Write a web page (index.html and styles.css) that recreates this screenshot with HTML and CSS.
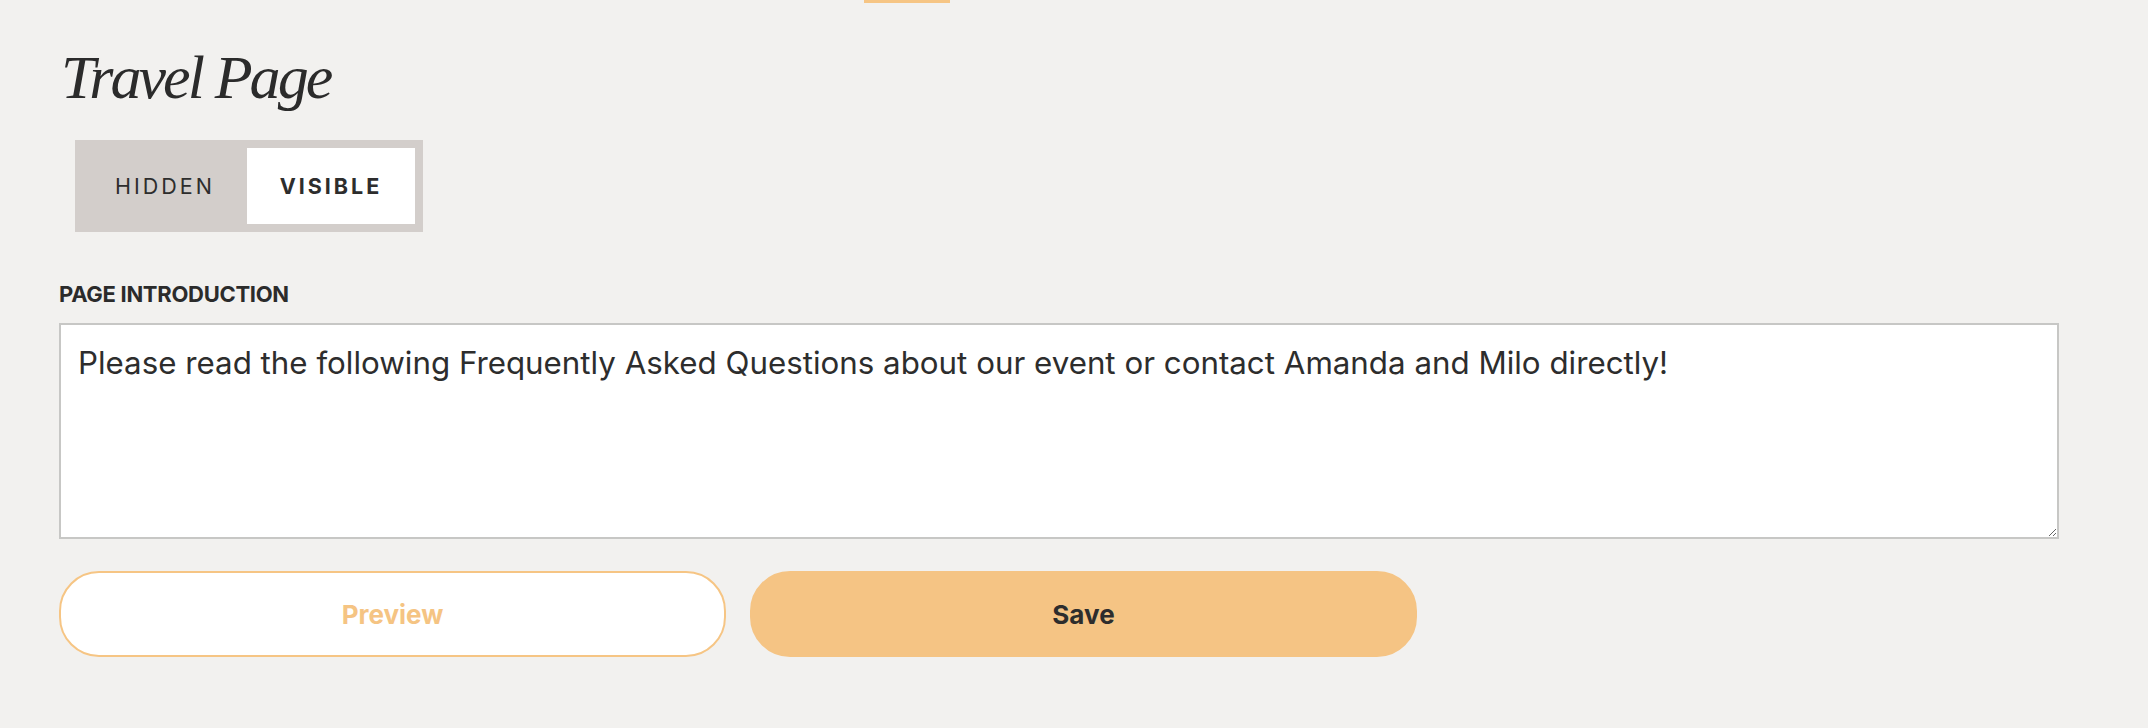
FILE: index.html
```html
<!DOCTYPE html>
<html lang="en">
<head>
<meta charset="utf-8">
<title>Travel Page</title>
<link rel="stylesheet" href="styles.css">
</head>
<body>
<div class="topbar"><div class="tab-indicator"></div></div>
<main class="page">
  <h1 class="title">Travel Page</h1>
  <div class="toggle">
    <button class="toggle-option">HIDDEN</button>
    <button class="toggle-option is-active">VISIBLE</button>
  </div>
  <label class="field-label" for="intro">PAGE INTRODUCTION</label>
  <textarea id="intro" class="field-textarea">Please read the following Frequently Asked Questions about our event or contact Amanda and Milo directly!</textarea>
  <div class="actions">
    <button class="btn btn-outline">Preview</button>
    <button class="btn btn-primary">Save</button>
  </div>
</main>
</body>
</html>
```

FILE: styles.css
```css
html, body {
  margin: 0;
  padding: 0;
  background: #f2f1ef;
  color: #2d2d2d;
  font-family: Inter, "Noto Sans", sans-serif;
}

.topbar {
  height: 3px;
}

.tab-indicator {
  margin-left: 864px;
  width: 86px;
  height: 3px;
  background: #f6c584;
}

.page {
  padding: 0 89px 0 59px;
  display: flex;
  flex-direction: column;
  align-items: flex-start;
}

.title {
  margin: 43px 0 0 2px;
  font-family: "Liberation Serif", serif;
  font-style: italic;
  font-weight: 400;
  font-size: 62px;
  line-height: 62px;
  letter-spacing: -2.9px;
  color: #2b2b2b;
}

.toggle {
  margin: 32px 0 0 16px;
  display: grid;
  grid-template-columns: 164px 168px;
  padding: 8px;
  background: #d3cecb;
  height: 76px;
}

.toggle-option {
  border: 0;
  background: transparent;
  font-family: Inter, "Noto Sans", sans-serif;
  font-size: 21.5px;
  letter-spacing: 3px;
  color: #2d2d2d;
  padding: 0;
  display: flex;
  align-items: center;
  justify-content: center;
}

.toggle-option.is-active {
  background: #ffffff;
  font-weight: 700;
}

.field-label {
  margin-top: 49px;
  font-size: 22px;
  line-height: 26px;
  font-weight: 700;
  letter-spacing: -0.3px;
  color: #2b2b2b;
}

.field-textarea {
  margin-top: 16px;
  box-sizing: border-box;
  width: 2000px;
  height: 216px;
  border: 2px solid #c7c7c5;
  border-radius: 0;
  background: #ffffff;
  padding: 16px 17px;
  font-family: Inter, "Noto Sans", sans-serif;
  font-size: 31.3px;
  line-height: 45px;
  color: #2d2d2d;
  outline: none;
}

.actions {
  margin-top: 32px;
  display: flex;
  gap: 24px;
  width: 2000px;
}

.btn {
  box-sizing: border-box;
  width: 667px;
  height: 86px;
  border-radius: 40px;
  font-family: Inter, "Noto Sans", sans-serif;
  font-size: 26px;
  font-weight: 700;
  cursor: pointer;
}

.btn-outline {
  background: #ffffff;
  border: 2px solid #f6c584;
  color: #f5c483;
}

.btn-primary {
  background: #f5c484;
  border: 2px solid #f5c484;
  color: #2d2d2d;
}
```
